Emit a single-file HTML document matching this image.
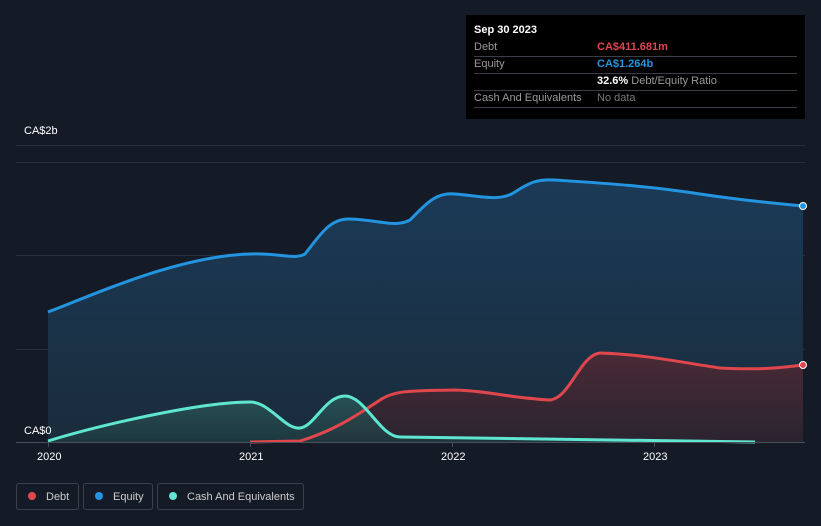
<!DOCTYPE html><html><head><style>
body{margin:0;width:821px;height:526px;background:#151b26;font-family:"Liberation Sans",sans-serif;overflow:hidden;position:relative}
.tip{position:absolute;left:466px;top:15px;width:339px;height:104px;background:#000;color:#fff;font-size:11px}
.tip .r{position:absolute;left:8px;right:8px;border-bottom:1px solid #3a3e45;height:17px;line-height:17px;color:#999}
.tip b{font-weight:bold}
.leg{position:absolute;top:483px;height:27px;border:1px solid #3b414c;border-radius:3px;color:#ccc;font-size:11px;line-height:27px;box-sizing:border-box}
.leg i{display:inline-block;width:8px;height:8px;border-radius:50%;margin:0 10px 0 11px;vertical-align:-0px}
.ax{position:absolute;color:#fff;font-size:11px}
</style></head><body>
<svg width="821" height="526" style="position:absolute;left:0;top:0">
<defs>
<linearGradient id="ge" x1="0" y1="0" x2="0" y2="1"><stop offset="0" stop-color="#1b3a57"/><stop offset="1" stop-color="#1a2c3c"/></linearGradient>
<linearGradient id="gd" x1="0" y1="0" x2="0" y2="1"><stop offset="0" stop-color="#4a2a36"/><stop offset="1" stop-color="#2a2430"/></linearGradient>
<linearGradient id="gc" x1="0" y1="0" x2="0" y2="1"><stop offset="0" stop-color="#2a5a5a"/><stop offset="1" stop-color="#1f3a40"/></linearGradient>
</defs>
<g stroke="#2a303b" stroke-width="1">
<line x1="16" y1="145.5" x2="805" y2="145.5"/><line x1="16" y1="162.5" x2="805" y2="162.5"/>
<line x1="16" y1="255.5" x2="805" y2="255.5"/><line x1="16" y1="349.5" x2="805" y2="349.5"/>
</g>
<path d="M48,312 C100,292 180,256 250,254 C280,253 295,260 305,254 C320,235 330,218 350,219 C380,220 395,228 410,220 C425,205 435,192 455,194 C480,196 500,202 515,192 C530,182 538,179 555,180 C600,183 650,186 700,194 C740,200 770,203 803,206 L803,442 L48,442Z" fill="url(#ge)"/>
<path d="M250,442 L300,441 C330,432 350,420 380,400 C395,390 410,391 455,390 C490,391 510,398 550,400 C570,398 580,355 600,353 C640,354 680,362 720,368 C760,370 780,368 803,365 L803,442 L250,442Z" fill="url(#gd)"/>
<path d="M48,441 C100,425 200,402 250,402 C270,402 285,430 300,428 C315,426 325,396 345,396 C365,396 380,437 400,437 L755,442 L48,442Z" fill="url(#gc)" opacity="0.8"/>
<path d="M48,312 C100,292 180,256 250,254 C280,253 295,260 305,254 C320,235 330,218 350,219 C380,220 395,228 410,220 C425,205 435,192 455,194 C480,196 500,202 515,192 C530,182 538,179 555,180 C600,183 650,186 700,194 C740,200 770,203 803,206" fill="none" stroke="#2394df" stroke-width="3"/>
<path d="M250,442 L300,441 C330,432 350,420 380,400 C395,390 410,391 455,390 C490,391 510,398 550,400 C570,398 580,355 600,353 C640,354 680,362 720,368 C760,370 780,368 803,365" fill="none" stroke="#e0474c" stroke-width="3"/>
<path d="M48,441 C100,425 200,402 250,402 C270,402 285,430 300,428 C315,426 325,396 345,396 C365,396 380,437 400,437 L755,442" fill="none" stroke="#5ee6d0" stroke-width="3"/>
<line x1="16" y1="442.5" x2="805" y2="442.5" stroke="#4a505a"/>
<g stroke="#4a505a"><line x1="48.5" y1="442" x2="48.5" y2="447"/><line x1="250.5" y1="442" x2="250.5" y2="447"/><line x1="452.5" y1="442" x2="452.5" y2="447"/><line x1="654.5" y1="442" x2="654.5" y2="447"/></g>
<circle cx="803" cy="206" r="3.5" fill="#2394df" stroke="#fff" stroke-width="1"/>
<circle cx="803" cy="365" r="3.5" fill="#e0474c" stroke="#fff" stroke-width="1"/>
</svg>
<div class="ax" style="left:24px;top:125px">CA$2b</div>
<div class="ax" style="left:24px;top:425px">CA$0</div>
<div class="ax" style="left:37px;top:451px">2020</div>
<div class="ax" style="left:239px;top:451px">2021</div>
<div class="ax" style="left:441px;top:451px">2022</div>
<div class="ax" style="left:643px;top:451px">2023</div>
<div class="tip">
<div style="position:absolute;left:8px;top:9px;font-weight:bold">Sep 30 2023</div>
<div class="r" style="top:24px">Debt<span style="position:absolute;left:123px;color:#e0474c;font-weight:bold">CA$411.681m</span></div>
<div class="r" style="top:41px">Equity<span style="position:absolute;left:123px;color:#2394df;font-weight:bold">CA$1.264b</span></div>
<div class="r" style="top:58px"><span style="position:absolute;left:123px;color:#999"><b style="color:#fff">32.6%</b> Debt/Equity Ratio</span></div>
<div class="r" style="top:75px">Cash And Equivalents<span style="position:absolute;left:123px;color:#777">No data</span></div>
</div>
<div class="leg" style="left:16px;width:63px"><i style="background:#e0474c"></i>Debt</div>
<div class="leg" style="left:83px;width:70px"><i style="background:#2394df"></i>Equity</div>
<div class="leg" style="left:157px;width:147px"><i style="background:#5ee6d0"></i>Cash And Equivalents</div>
</body></html>
